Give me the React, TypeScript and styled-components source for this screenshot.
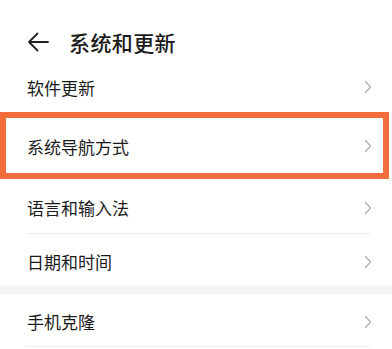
import React from "react";
import styled, { createGlobalStyle } from "styled-components";

const Global = createGlobalStyle`
  html, body { margin: 0; padding: 0; background: #ffffff; }
  body { font-family: "Noto Sans CJK SC", "Noto Sans", sans-serif; }
`;

const Page = styled.div`
  width: 392px;
  height: 349px;
  background: #ffffff;
  overflow: hidden;
  display: flex;
  flex-direction: column;
`;

const Header = styled.div`
  height: 62px;
  display: flex;
  align-items: center;
  padding: 22px 0 0 27px;
  gap: 20px;
  box-sizing: border-box;
`;

const Title = styled.div`
  font-size: 21px;
  color: #1b1b1b;
  font-weight: 500;
  letter-spacing: 0.4px;
`;

const Row = styled.div<{ $h: number }>`
  height: ${(p) => p.$h}px;
  display: flex;
  align-items: center;
  padding: 0 20px 0 27px;
  box-sizing: border-box;
`;

const RowInner = styled.div<{ $shift: number }>`
  flex: 1;
  align-self: stretch;
  display: flex;
  align-items: center;
  justify-content: space-between;
  padding-top: ${(p) => p.$shift}px;
`;

const Highlight = styled.div`
  height: 67px;
  margin-right: 3px;
  border: 6px solid #f26c3c;
  box-sizing: border-box;
  display: flex;
  align-items: center;
  justify-content: space-between;
  padding: 1px 11px 0 21px;
`;

const Label = styled.span`
  font-size: 17px;
  color: #1a1a1a;
`;

const DividerRow = styled.div`
  display: flex;
  flex-direction: column;
`;

const Line = styled.div`
  height: 1px;
  margin: 0 22px 0 27px;
  background: #ebebeb;
`;

const Band = styled.div`
  height: 8px;
  background: #f3f3f3;
`;

const Chevron = () => (
  <svg width="8" height="14" viewBox="0 0 8 14" fill="none">
    <path d="M1.5 1.5L6.5 7L1.5 12.5" stroke="#adadad" strokeWidth="1.2" strokeLinecap="round" strokeLinejoin="round" />
  </svg>
);

const BackArrow = () => (
  <svg width="22" height="20" viewBox="0 0 22 20" fill="none">
    <path d="M21 10H2M10.5 1.5L2 10L10.5 18.5" stroke="#222" strokeWidth="1.8" strokeLinecap="round" strokeLinejoin="round" />
  </svg>
);

const Item = ({ label, h, shift = 3 }: { label: string; h: number; shift?: number }) => (
  <Row $h={h}>
    <RowInner $shift={shift}>
      <Label>{label}</Label>
      <Chevron />
    </RowInner>
  </Row>
);

export default function App() {
  return (
    <>
      <Global />
      <Page>
        <Header>
          <BackArrow />
          <Title>系统和更新</Title>
        </Header>
        <Item label="软件更新" h={50} shift={0} />
        <Highlight>
          <Label>系统导航方式</Label>
          <Chevron />
        </Highlight>
        <DividerRow>
          <Item label="语言和输入法" h={54} />
          <Line />
        </DividerRow>
        <Item label="日期和时间" h={52} />
        <Band />
        <DividerRow>
          <Item label="手机克隆" h={52} />
          <Line />
        </DividerRow>
      </Page>
    </>
  );
}
